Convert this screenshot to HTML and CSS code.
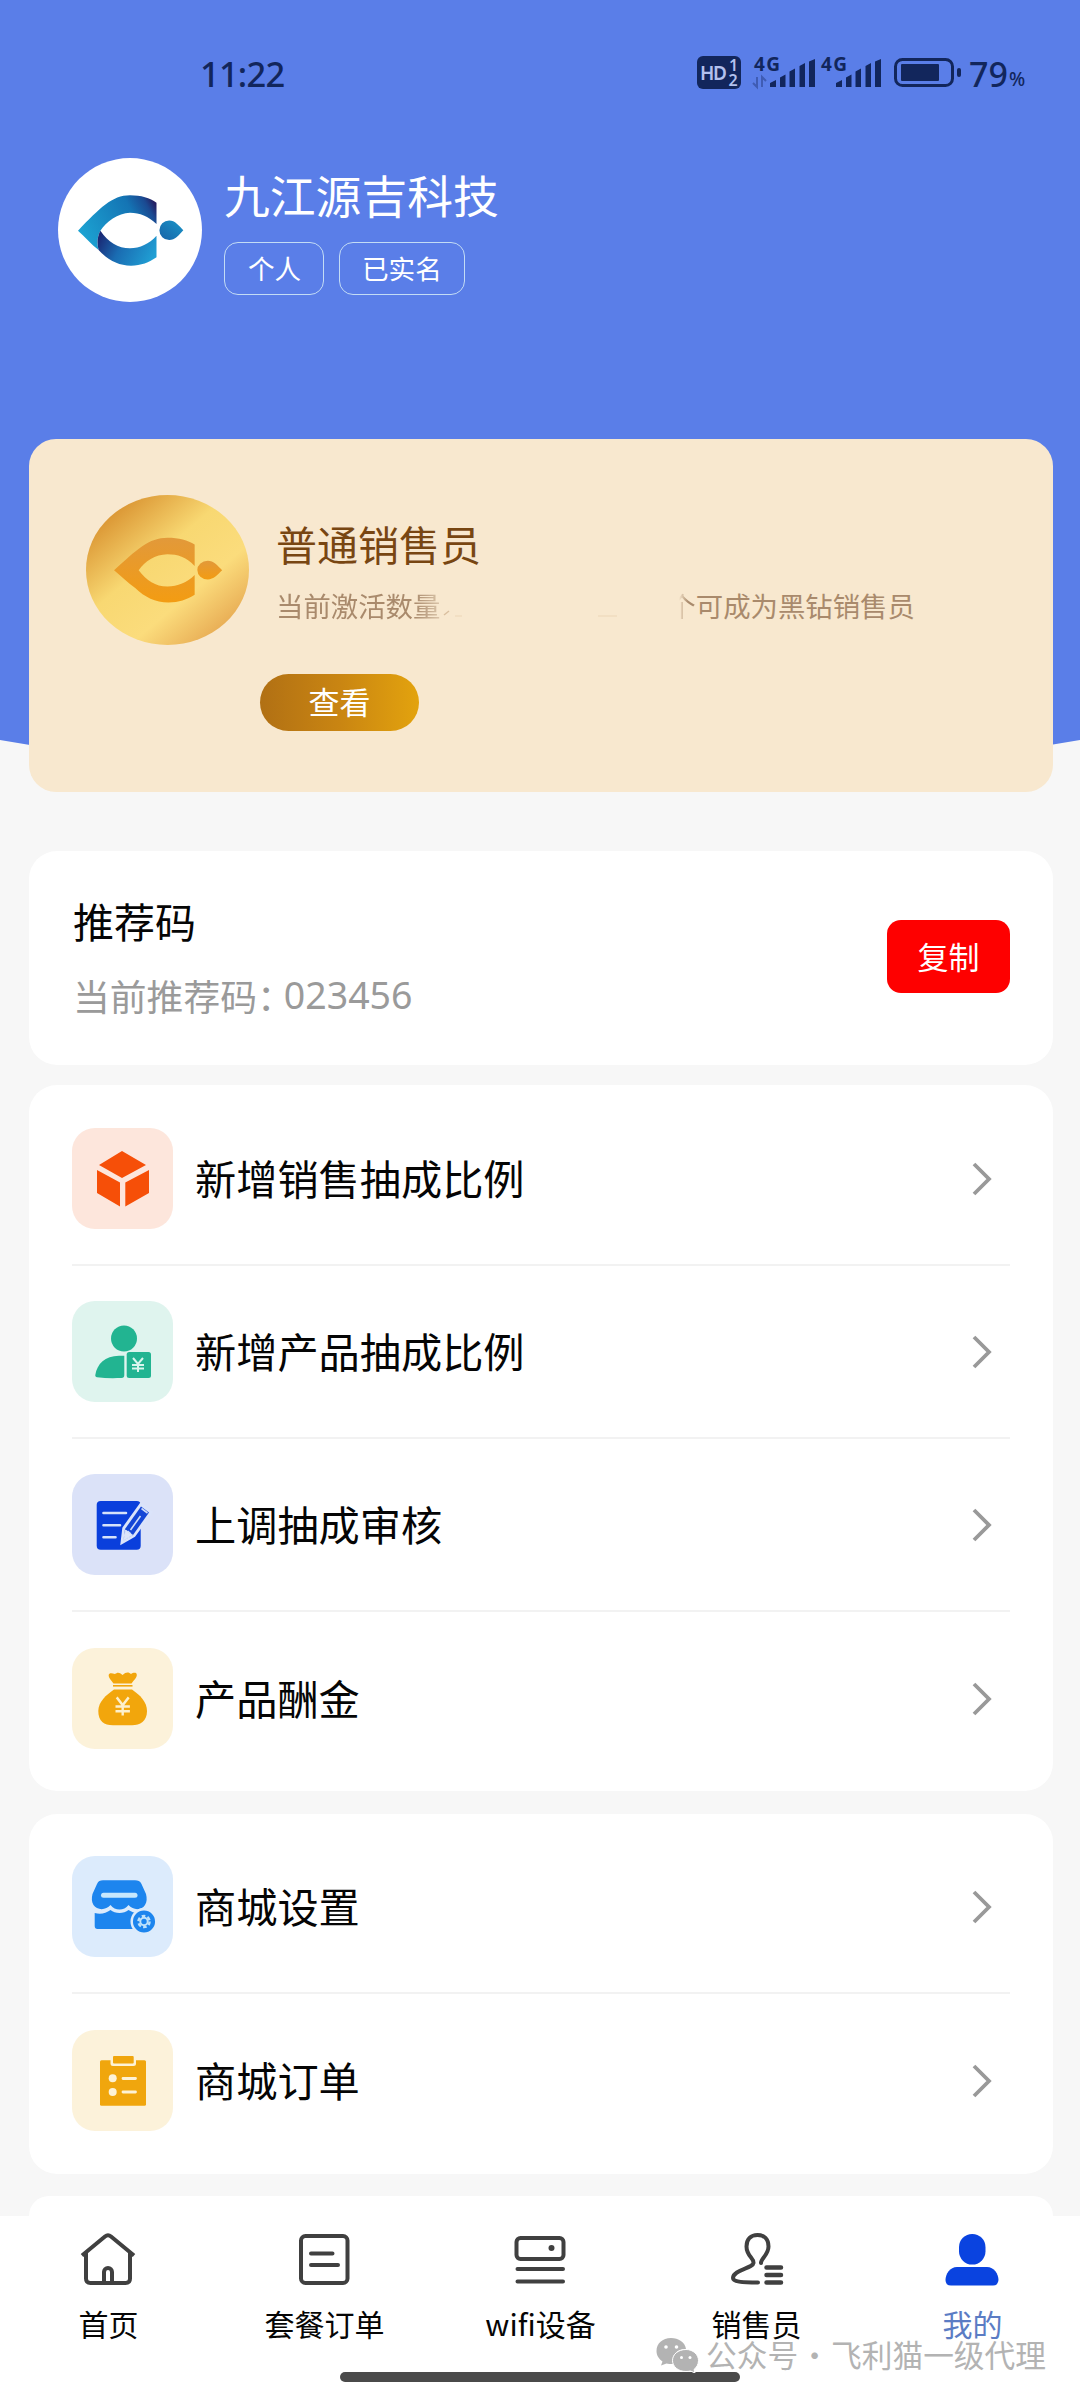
FILE: index.html
```html
<!DOCTYPE html>
<html lang="zh-CN">
<head>
<meta charset="utf-8">
<title>我的</title>
<link rel="stylesheet" href="styles.css">
</head>
<body>
<svg width="0" height="0" class="defs" aria-hidden="true">
  <defs>
    <linearGradient id="blueTop" x1="0" y1="0.6" x2="1" y2="0.2"><stop offset="0" stop-color="#1ca2d2"/><stop offset="0.7" stop-color="#1474b4"/><stop offset="0.9" stop-color="#1a4a92"/><stop offset="1" stop-color="#241f62"/></linearGradient>
    <linearGradient id="blueBottom" x1="0" y1="0.3" x2="1" y2="0.6"><stop offset="0" stop-color="#1a2a76"/><stop offset="0.4" stop-color="#1a6cb2"/><stop offset="1" stop-color="#209fd4"/></linearGradient>
    <linearGradient id="blueDot" x1="0" y1="1" x2="1" y2="0"><stop offset="0" stop-color="#1663a8"/><stop offset="1" stop-color="#1a95c8"/></linearGradient>
    <linearGradient id="gold" x1="0.12" y1="0.1" x2="0.9" y2="0.95"><stop offset="0" stop-color="#d8902e"/><stop offset="0.38" stop-color="#f8d872"/><stop offset="0.66" stop-color="#fbdc7c"/><stop offset="1" stop-color="#e3a04a"/></linearGradient>
    <linearGradient id="goldMark" x1="0" y1="0" x2="0" y2="1"><stop offset="0" stop-color="#e2993a"/><stop offset="1" stop-color="#f39c12"/></linearGradient>
    <path id="yen" d="M-5-7 0-1 5-7M0-1V7M-6 0H6M-6 3.6H6" fill="none" stroke-width="2"/>
    <path id="bars" d="M0 28V24L6 21V28ZM10 28V18.500L15.500 15.500V28ZM19.500 28V12.500L25 9.500V28ZM29.500 28V7L35 4V28ZM39 28V2.500L45 0V28Z"/>
  </defs>
</svg>

<div class="page">
  <header class="hero">
    <div class="status">
      <span class="clock">11:22</span>
      <svg class="status-icons" width="340" height="44" viewBox="0 0 340 44" fill="#12265c">
        <rect x="7" y="4" width="44" height="33" rx="6"/>
        <g class="hd"><text x="10" y="27.500" font-size="19" textLength="27">HD</text><text x="39" y="19" font-size="16">1</text><text x="38.500" y="34" font-size="16">2</text></g>
        <text class="net" x="64" y="19" textLength="26">4G</text>
        <path d="M67 25V35L63 31M72 35V25L76 29" fill="none" stroke="#3f5cb4" stroke-width="2"/>
        <use href="#bars" x="80" y="7"/>
        <text class="net" x="131" y="19" textLength="26">4G</text>
        <use href="#bars" x="146" y="7"/>
        <rect x="205.500" y="7.500" width="57" height="26" rx="7" fill="none" stroke="#12265c" stroke-width="3"/>
        <rect x="211" y="12" width="38" height="17" rx="1"/>
        <rect x="267" y="16" width="4" height="9" rx="2"/>
        <text class="pct" x="279" y="34.500" font-size="34">79</text>
        <text class="pct" x="319" y="34" font-size="19">%</text>
      </svg>
    </div>
    <div class="profile">
      <div class="avatar">
        <svg width="144" height="144" viewBox="0 0 144 144">
          <path fill="url(#blueTop)" d="M20 72.700C42 50 54 37.300 72 37.300 83 37.300 92 40 98.500 44.700V66C90 58 82 54.700 72 54.700 60 55 48 64 42.400 72.700 39 79 39 86 40.600 92 33 86 27 79 20 72.700Z"/>
          <path fill="url(#blueBottom)" d="M42.400 72.700C50 84 60 90.300 72 90.300 82 90 91 86 98.500 77.700V99.300C91 104.500 83 107.700 73 107.700 60 107.500 50 102 40.600 92 39 86 39 79 42.400 72.700Z"/>
          <path fill="url(#blueDot)" d="M125.300 72.200C121 77 117 82 111.200 82A9.800 9.800 0 0 1 111.200 62.400C117 62.400 121 67.500 125.300 72.200Z"/>
        </svg>
      </div>
      <div class="who">
        <h1 class="name">九江源吉科技</h1>
        <div class="tags"><span class="tag">个人</span><span class="tag">已实名</span></div>
      </div>
    </div>
  </header>

  <main class="content">
    <section class="level">
      <div class="level-row">
        <svg width="163" height="150" viewBox="0 0 163 150">
          <ellipse cx="81.500" cy="75" rx="81.500" ry="75" fill="url(#gold)"/>
          <g transform="translate(7.500 8.200) scale(1.027 .923)" fill="url(#goldMark)">
            <path d="M20 72.700C42 50 54 37.300 72 37.300 83 37.300 92 40 98.500 44.700V68C90 58 82 55.300 72 55.300 60 55.500 50 63 44 72.700 52 84 60 90.300 72 90.300 82 90 91 86 98.500 77.700V99.300C91 104.500 83 107.700 73 107.700 60 107.500 50 102 40.600 92 33 86 27 79 20 72.700Z"/>
            <path d="M125.300 72.600C121 77 117 82.600 111.200 82.600A10 10 0 0 1 111.200 62.400C117 62.400 121 68 125.300 72.600Z"/>
          </g>
        </svg>
        <div class="level-text">
          <h2 class="level-title">普通销售员</h2>
          <p class="level-sub"><span class="fade-end">当前激活数量</span><svg class="gap" width="227" height="28" viewBox="0 0 227 28"><path d="M4 24 9 20" stroke="#d9bf9f" stroke-width="1.500"/><path d="M15 25H22M158 25H177" stroke="#f0dcc0" stroke-width="1.500"/></svg><span class="fade-start">个</span><span>可成为黑钻销售员</span></p>
        </div>
      </div>
      <button class="view">查看</button>
    </section>

    <section class="card referral">
      <div>
        <h2 class="row-title">推荐码</h2>
        <p class="code">当前推荐码<span class="colon">：</span><span class="digits">023456</span></p>
      </div>
      <button class="copy">复制</button>
    </section>

    <nav class="card menu">
      <a class="item"><span class="ico orange"><svg viewBox="0 0 101 101" fill="#f64f08"><path d="M50 23 74 37 50 50 27 37ZM25 42 48 54.500V78.500L25 65ZM77 42V65L53.300 78.500V54.500Z"/></svg></span><span class="label">新增销售抽成比例</span><svg class="chev" viewBox="0 0 22 36"><path d="M3 3 18 18 3 33"/></svg></a>
      <a class="item"><span class="ico green"><svg viewBox="0 0 101 101" fill="#22b491"><circle cx="52" cy="37.500" r="13"/><path d="M52.300 54.700H47C33 54.700 25 63 23.300 74 23 75.500 24 76 25 76.200 33 77.300 41 77.200 49.500 77 51.500 76.800 52.300 76 52.300 74Z"/><rect x="54.700" y="51" width="24.300" height="26" rx="2.500"/><use href="#yen" transform="translate(66 64)" stroke="#d9f6ee"/></svg></span><span class="label">新增产品抽成比例</span><svg class="chev" viewBox="0 0 22 36"><path d="M3 3 18 18 3 33"/></svg></a>
      <a class="item"><span class="ico indigo"><svg viewBox="0 0 101 101"><rect x="24.700" y="27" width="44" height="48.700" rx="4" fill="#0a3fdc"/><path d="M31.500 39H54M31.500 51.300H48M31.500 63.300H43.500" stroke="#d6e2fa" stroke-width="2.600" stroke-linecap="round"/><path d="M51 67 52.500 54.500 69 31.500 78 38.500 61.500 61Z" fill="#0a3fdc" stroke="#dbe4fa" stroke-width="4.500"/><path d="M51.500 66.500 53 55 69 32.500 77 38.500 61 61Z" fill="#1547d6"/><path d="M51.500 66.500 53.500 56 60.500 61Z" fill="#dbe4fa" stroke="#dbe4fa"/><path d="M69.500 34.500 75.500 39M58.500 56 68.500 42M55.500 57 58.500 59.500" stroke="#cfdcf8" stroke-width="1.600"/></svg></span><span class="label">上调抽成审核</span><svg class="chev" viewBox="0 0 22 36"><path d="M3 3 18 18 3 33"/></svg></a>
      <a class="item"><span class="ico yellow"><svg viewBox="0 0 101 101" fill="#f2a60c"><path d="M41.500 35.500C39 32 36.500 30 36.700 27 37 24.500 40 25 43 26 45 24.500 47 23.500 50.500 27 54 23.500 57 24 59 26 61 24.500 65 24 64.800 27 64.800 30 62 32 59.500 35.500Z"/><path d="M41 37.800H60.500" stroke="#f2a60c" stroke-width="1.600"/><path d="M42 41.500H60C68 47 75 54 75 63 75 73 68 77.300 60 77.300H41C32 77.300 26.300 73 26.300 63 26.300 54 34 47 42 41.500Z"/><use href="#yen" transform="translate(50.700 58.500) scale(1.200 1.300)" stroke="#fdf0cc"/></svg></span><span class="label">产品酬金</span><svg class="chev" viewBox="0 0 22 36"><path d="M3 3 18 18 3 33"/></svg></a>
    </nav>

    <nav class="card menu">
      <a class="item"><span class="ico sky"><svg viewBox="0 0 101 101" fill="#1d85ee"><path d="M31 24.300H63C66 24.300 68 25 69.500 28L74 38C75 42 75 46 73 49 70 54.500 61 54.500 56.500 49 52 55 43 55 38.500 49 34 54.500 25 54.500 21.500 49 19.500 46 19.500 42 20.500 38L25 28C26.500 25 28 24.300 31 24.300Z"/><path d="M22.700 57C29 59 34 57 38.500 54 43 58 52 58 56.500 54 60 56 62 57 65 57V73H25.500Q22.700 73 22.700 70Z"/><path d="M31.500 39.300H63" stroke="#c6e7fd" stroke-width="5" stroke-linecap="round"/><circle cx="72" cy="65.500" r="12.300" stroke="#dcebfb" stroke-width="2.500"/><circle cx="72" cy="65.500" r="5.600" fill="none" stroke="#bfe2fb" stroke-width="2.400" stroke-dasharray="3.600 2.260"/><circle cx="72" cy="65.500" r="3.700" fill="none" stroke="#bfe2fb" stroke-width="2"/></svg></span><span class="label">商城设置</span><svg class="chev" viewBox="0 0 22 36"><path d="M3 3 18 18 3 33"/></svg></a>
      <a class="item"><span class="ico yellow"><svg viewBox="0 0 101 101" fill="#f0a60d"><rect x="28" y="30.300" width="46" height="45.500" rx="1.500"/><path d="M38.500 29V33.500Q38.500 36 41 36H61.500Q64 36 64 33.500V29Z" fill="#fdf2d6"/><rect x="41" y="26" width="20.700" height="7.500" rx="1"/><circle cx="40.700" cy="48.300" r="4" fill="#fdf2d6"/><circle cx="40.700" cy="62" r="4" fill="#fdf2d6"/><path d="M51 48.500H63.500M51 62H63.500" stroke="#fdf2d6" stroke-width="2.800" stroke-linecap="round"/></svg></span><span class="label">商城订单</span><svg class="chev" viewBox="0 0 22 36"><path d="M3 3 18 18 3 33"/></svg></a>
    </nav>

    <div class="card next"></div>
  </main>

  <footer class="tabbar">
    <div class="tabs">
      <a class="tab"><svg viewBox="0 0 56 56"><path d="M2 24.500 25 5.500Q28 3 31 5.500L54 24.500M6 22V47.500Q6 52 10.500 52H45.500Q50 52 50 47.500V22M24 52V41A4 4 0 0 1 32 41V52"/></svg><span>首页</span></a>
      <a class="tab"><svg viewBox="0 0 56 56"><rect x="5" y="5" width="46.500" height="47" rx="4.500"/><path d="M15 22.500H36.500M15 34H42" stroke-linecap="round"/></svg><span>套餐订单</span></a>
      <a class="tab"><svg viewBox="0 0 56 56"><rect x="4.500" y="7" width="47" height="21" rx="4"/><path d="M5.500 38H51M5.500 50.500H51" stroke-linecap="round"/><circle cx="39.500" cy="17" r="3" fill="#404040" stroke="none"/></svg><span>wifi设备</span></a>
      <a class="tab"><svg viewBox="0 0 56 56"><path d="M33 32C32.500 28 40.500 24 40.500 15.500 40.500 8 36 4 29.500 4 23 4 18.500 8 18.500 15.500 18.500 25 26 27 25.500 32 25 37 5 39 5 47 5 50.500 13 51.500 30 51.500" stroke-linecap="round"/><path d="M38.500 36.500H53M38.500 44H53M38.500 51.500H53" stroke-width="4.500" stroke-linecap="round"/></svg><span>销售员</span></a>
      <a class="tab active"><svg viewBox="0 0 56 56"><rect x="15" y="3" width="26.500" height="30.500" rx="13.200"/><path d="M13 36H43C50 36 54.500 43 54.500 49Q54 54.500 49 54.500H7Q1.500 54.500 1.500 49C1.500 43 6 36 13 36Z"/></svg><span>我的</span></a>
    </div>
    <div class="watermark">
      <svg width="43" height="36" viewBox="0 0 43 36"><path fill="#b3b3b3" d="M15 1C6.500 1 .5 6.500 .5 14 .5 18.500 3 22 6.500 24.500L5 28.500 10.500 26.500C12 27 15 27 17 27 15 18 21 12 30 12 29 5 22.500 1 15 1Z"/><path fill="#b3b3b3" stroke="#fff" stroke-width="1" d="M30 12.500C22 12.500 16.500 17.500 16.500 23.500S22 34.500 30 34.500C31.500 34.500 33 34.300 34.500 34L39 36 38 32.500C40.500 30.500 42.500 27.500 42.500 23.500 42.500 17.500 37 12.500 30 12.500Z"/><g fill="#fff"><circle cx="10" cy="10" r="1.800"/><circle cx="20.500" cy="10" r="1.800"/><circle cx="25.500" cy="20.500" r="1.500"/><circle cx="34" cy="20.500" r="1.500"/></g></svg>
      <span>公众号</span><span class="dot">·</span><span>飞利猫一级代理</span>
    </div>
    <div class="homebar"></div>
  </footer>
</div>
</body>
</html>
```
FILE: styles.css
```css
* { box-sizing: border-box; margin: 0; padding: 0; }
body {
  width: 1080px;
  height: 2400px;
  overflow: hidden;
  background: #f7f7f7;
  color: #050505;
  font-family: "Noto Sans CJK SC", sans-serif;
}
h1, h2 { font-weight: 400; }
svg { display: block; flex: none; }
button { border: 0; font-family: inherit; color: #fff; }
.defs { position: absolute; }
.page { height: 2400px; display: flex; flex-direction: column; overflow: hidden; }

.hero {
  flex: none;
  height: 780px;
  margin-bottom: -341px;
  background: #5a7ee8;
  clip-path: polygon(0 0, 100% 0, 100% 740px, 1050px 745px, 540px 780px, 30px 745px, 0 740px);
}
.status {
  display: flex;
  justify-content: space-between;
  align-items: flex-start;
  padding: 52px 50px 0 200px;
  height: 158px;
}
.clock {
  font: 500 34.500px/43px "Noto Sans", sans-serif;
  letter-spacing: -.8px;
  color: #12265c;
}
.status-icons { font-family: "Noto Sans", sans-serif; }
.hd { fill: #b3c1ee; font-weight: 600; }
.net { font-size: 19px; font-weight: 700; }
.pct { font-weight: 500; }
.profile { display: flex; gap: 22px; padding-left: 58px; }
.avatar { width: 144px; height: 144px; border-radius: 50%; background: #fff; }
.who { padding-top: 9px; }
.name { font-size: 45.800px; line-height: 54px; color: #fff; }
.tags { display: flex; gap: 15px; margin-top: 21px; }
.tag {
  height: 53px;
  padding: 0 22px 0 22px;
  border: 1px solid #c3dcf5;
  border-radius: 14px;
  font-size: 26.600px;
  line-height: 49px;
  color: #fff;
}
.tag:first-child { padding: 0 23px; width: 100px; white-space: nowrap; }

.content { position: relative; flex: none; width: 1024px; margin-left: 29px; height: 1777px; overflow: hidden; }
.level {
  height: 353px;
  padding: 56px 0 0 57px;
  border-radius: 27px;
  background: #f8e8cf;
}
.level-row { display: flex; gap: 27px; }
.level-text { padding-top: 24px; }
.level-title { font-size: 41px; line-height: 48px; color: #784612; }
.level-sub { display: flex; align-items: center; margin-top: 20px; font-size: 27.400px; line-height: 36px; color: #a98a6c; white-space: nowrap; }
.gap { margin-right: 1px; }
.fade-end { -webkit-mask-image: linear-gradient(90deg, #000 138px, rgba(0,0,0,.35) 165px); mask-image: linear-gradient(90deg, #000 138px, rgba(0,0,0,.35) 165px); }
.fade-start { -webkit-mask-image: linear-gradient(90deg, transparent 11px, #000 20px); mask-image: linear-gradient(90deg, transparent 11px, #000 20px); }
.view {
  display: block;
  width: 159px;
  height: 57px;
  margin: 29px 0 0 174px;
  border-radius: 29px;
  background: linear-gradient(90deg, #b17014, #c98512 50%, #e3a30e);
  font-size: 31px;
  line-height: 52px;
  padding-bottom: 3px;
}

.card { border-radius: 28px; background: #fff; }
.referral {
  display: flex;
  justify-content: space-between;
  height: 214px;
  margin-top: 59px;
  padding: 45px 43px 0 44px;
}
.row-title { font-size: 41px; line-height: 48px; }
.code { display: flex; align-items: center; margin-top: 29px; font-size: 36.800px; line-height: 44px; color: #9a9a9a; }
.colon { letter-spacing: -10px; }
.digits { font-family: "Noto Sans", sans-serif; font-size: 37.500px; }
.copy {
  width: 123px;
  height: 73px;
  margin-top: 24px;
  border-radius: 14px;
  background: #fe0000;
  font-size: 31px;
  line-height: 69px;
  padding-bottom: 3px;
}

.menu { margin-top: 20px; padding: 8px 43px; height: 706px; }
.menu + .menu { margin-top: 23px; height: 360px; padding-top: 7px; }
.item { display: flex; align-items: center; height: 173px; border-bottom: 2px solid #f2f2f2; }
.item:last-child { border-bottom: 0; }
.ico { width: 101px; height: 101px; border-radius: 23px; }
.orange { background: #fde6dc; }
.green { background: #dff4ee; }
.indigo { background: #dbe2f8; }
.yellow { background: #fcf2da; }
.sky { background: #dcebfc; }
.label { margin-left: 22px; flex: 1; font-size: 41.200px; line-height: 48px; padding-bottom: 4px; }
.chev { width: 22px; height: 36px; margin-right: 17px; fill: none; stroke: #999; stroke-width: 3.800; }
.next { height: 40px; margin-top: 22px; }

.tabbar { flex: none; height: 184px; background: #fff; }
.tabs { display: flex; height: 156px; padding-top: 15px; }
.tab { width: 216px; display: flex; flex-direction: column; align-items: center; font-size: 30px; line-height: 36px; }
.tab span { margin: 18px 0 0 1px; }
.tab svg { width: 56px; height: 56px; fill: none; stroke: #404040; stroke-width: 4; }
.tab.active { color: #5b7cc4; }
.tab.active svg { fill: #0a43e0; stroke: none; }
.watermark {
  position: absolute;
  left: 656px;
  top: 2337px;
  display: flex;
  font-size: 30.700px;
  line-height: 34px;
  color: #b3b3b3;
  white-space: nowrap;
}
.watermark svg { margin-right: 7px; }
.dot { width: 33px; text-align: center; }
.homebar { width: 400px; height: 10px; margin-left: 340px; border-radius: 5px; background: #4a4a4a; }
```
